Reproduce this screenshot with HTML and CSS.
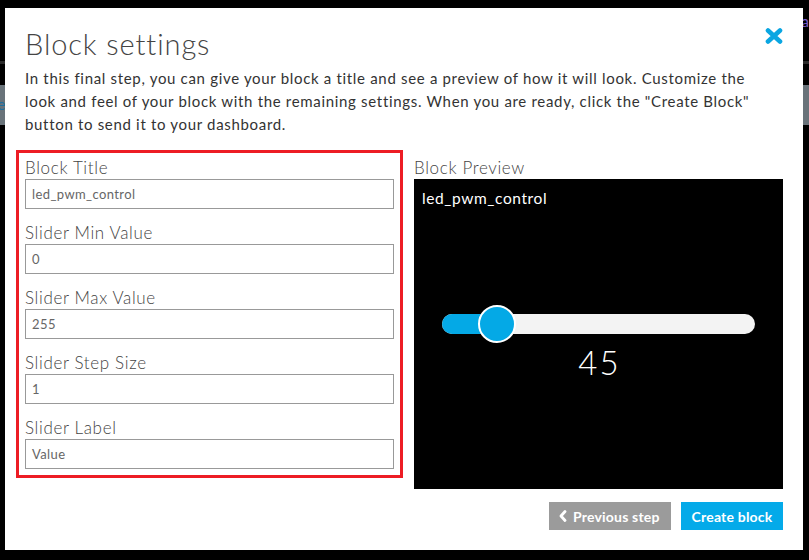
FILE: index.html
```html
<!DOCTYPE html>
<html>
<head>
<meta charset="utf-8">
<link rel="stylesheet" href="styles.css">
</head>
<body>
<div class="backdrop">
  <div class="bg-line bg-line-top"></div>
  <div class="bg-band"></div>
  <span class="bg-link">a</span>
  <span class="bg-e">e</span>
</div>
<div class="modal">
  <div class="header">
    <h1 class="title">Block settings</h1>
    <button class="close" aria-label="Close">
      <svg width="18" height="16" viewBox="0 0 18 16"><path d="M3 2.5 L15 13.5 M15 2.5 L3 13.5" stroke="#0aa6e2" stroke-width="4.6" stroke-linecap="round"/></svg>
    </button>
  </div>
  <p class="intro">In this final step, you can give your block a title and see a preview of how it will look. Customize the<br>look and feel of your block with the remaining settings. When you are ready, click the "Create Block"<br>button to send it to your dashboard.</p>
  <div class="columns">
    <div class="form-box">
      <div class="field">
        <label class="field-label">Block Title</label>
        <div class="input">led_pwm_control</div>
      </div>
      <div class="field">
        <label class="field-label">Slider Min Value</label>
        <div class="input">0</div>
      </div>
      <div class="field">
        <label class="field-label">Slider Max Value</label>
        <div class="input">255</div>
      </div>
      <div class="field">
        <label class="field-label">Slider Step Size</label>
        <div class="input">1</div>
      </div>
      <div class="field last">
        <label class="field-label">Slider Label</label>
        <div class="input">Value</div>
      </div>
    </div>
    <div class="preview-col">
      <div class="field-label">Block Preview</div>
      <div class="preview">
        <div class="preview-title">led_pwm_control</div>
        <div class="slider">
          <div class="track">
            <div class="fill" style="width: 17.6%"></div>
            <div class="thumb" style="left: calc(17.6% - 19px)"></div>
          </div>
        </div>
        <div class="value">45</div>
      </div>
      <div class="actions">
        <button class="btn btn-grey"><svg class="chev" width="8" height="12" viewBox="0 0 8 12"><path d="M6 1.5 L2 6 L6 10.5" stroke="#fff" stroke-width="2.8" fill="none" stroke-linecap="round" stroke-linejoin="round"/></svg>Previous step</button>
        <button class="btn btn-blue">Create block</button>
      </div>
    </div>
  </div>
</div>
</body>
</html>
```
FILE: styles.css
```css
* { box-sizing: border-box; }
html, body {
  margin: 0;
  padding: 0;
  background: #000;
  height: 560px;
  overflow: hidden;
  font-family: "Lato", "Open Sans", sans-serif;
}
.backdrop { position: absolute; inset: 0; z-index: 0; }
.bg-line { position: absolute; left: 0; right: 0; height: 3px; background: #2a2a2a; }
.bg-line-top { top: 61px; }
.bg-band { position: absolute; left: 0; right: 0; top: 85px; height: 40px; background: #69737a; }
.bg-link { position: absolute; right: 0; top: 12px; font-size: 15px; color: #7c5cc9; }
.bg-e { position: absolute; left: -3px; top: 94px; font-size: 16px; color: #1f6fa0; }

.modal {
  position: relative;
  z-index: 1;
  margin: 8px 0 0 5px;
  width: 798px;
  height: 542px;
  background: #fff;
  padding: 18px 20px 0 11px;
}
.header {
  display: flex;
  justify-content: space-between;
  align-items: flex-start;
  padding-left: 9px;
}
.title {
  margin: 0;
  font-size: 29px;
  line-height: 36px;
  font-weight: 300;
  color: #444;
  letter-spacing: 0.9px;
}
.close {
  border: 0;
  background: none;
  padding: 0;
  margin-top: 2px;
  width: 18px;
  height: 16px;
  display: block;
}
.close svg { display: block; }
.intro {
  margin: 5px 0 0 9px;
  font-size: 15px;
  line-height: 23px;
  color: #333;
  letter-spacing: 0.68px;
}
.columns {
  display: flex;
  align-items: flex-start;
  gap: 11px;
  margin-top: 14px;
}
.form-box {
  width: 387px;
  border: 3px solid #ed1c24;
  padding: 4px 6px 6px;
}
.field { margin-bottom: 13px; }
.field.last { margin-bottom: 0; }
.field-label {
  display: block;
  font-size: 17px;
  line-height: 22px;
  font-weight: 300;
  color: #444;
  letter-spacing: 0.65px;
}
.input {
  height: 30px;
  border: 1px solid #999;
  padding: 0 6px;
  font-size: 13px;
  line-height: 28px;
  color: #666;
  letter-spacing: 0.4px;
}
.preview-col {
  width: 369px;
  padding-top: 7px;
}
.preview {
  height: 310px;
  background: #000;
  padding: 10px 8px 0;
  color: #fff;
}
.preview-title {
  font-size: 15.5px;
  line-height: 18px;
  letter-spacing: 0.6px;
}
.slider { margin: 98px 20px 0; height: 38px; display: flex; align-items: center; }
.track {
  position: relative;
  width: 100%;
  height: 20px;
  border-radius: 10px;
  background: #f3f3f3;
}
.fill {
  height: 20px;
  border-radius: 10px 0 0 10px;
  background: #04a9e6;
}
.thumb {
  position: absolute;
  top: -9px;
  width: 38px;
  height: 38px;
  border-radius: 50%;
  background: #04a9e6;
  border: 2px solid #fff;
}
.value {
  text-align: center;
  font-size: 33px;
  line-height: 38px;
  font-weight: 300;
  letter-spacing: 2px;
  padding-left: 2px;
}
.actions {
  display: flex;
  justify-content: flex-end;
  gap: 10px;
  margin-top: 13px;
}
.btn {
  height: 28px;
  border: 0;
  color: #fff;
  font-family: "Lato", sans-serif;
  font-weight: 700;
  font-size: 14px;
  letter-spacing: 0.2px;
  padding: 0 10px;
  display: flex;
  align-items: center;
  gap: 6px;
}
.btn-grey { background: #9b9b9b; width: 122px; }
.btn-blue { background: #04aae9; width: 102px; justify-content: center; }
.chev { display: block; }
```
